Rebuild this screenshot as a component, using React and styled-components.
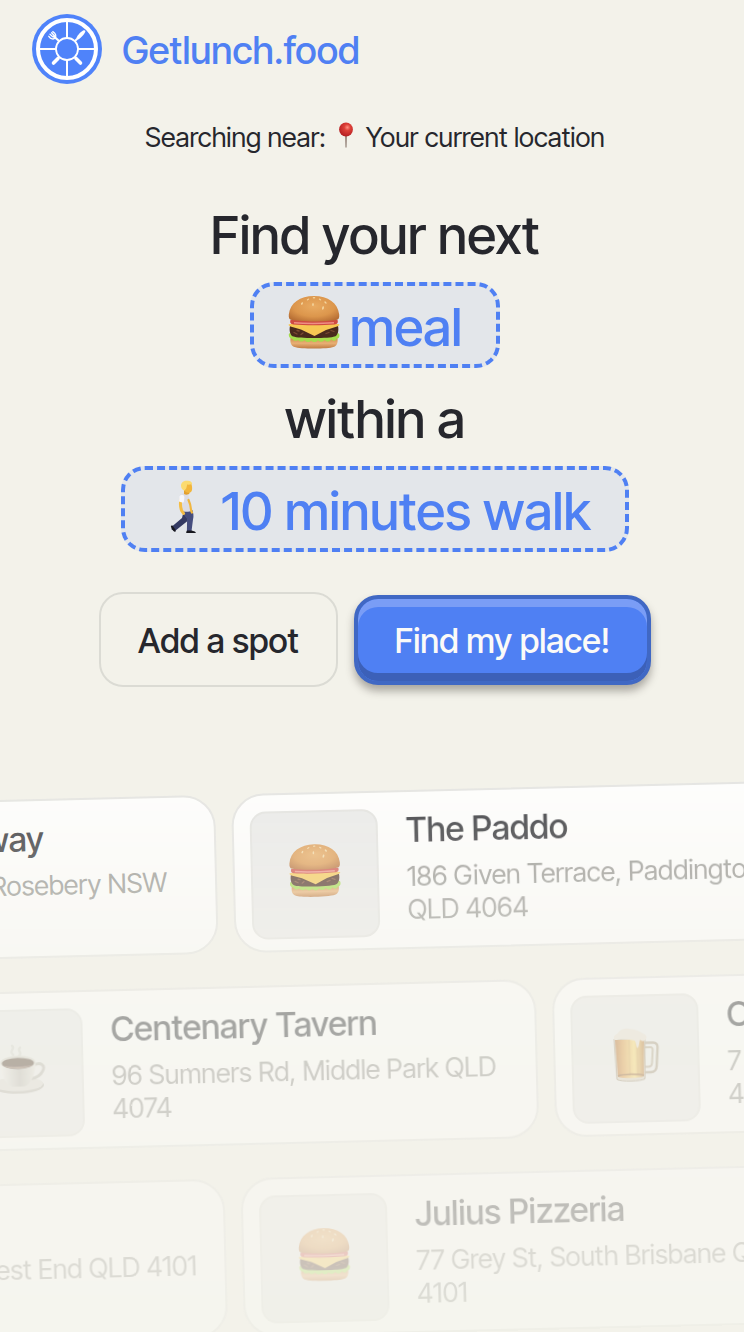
import React from "react";
import styled, { createGlobalStyle } from "styled-components";

const color = {
  page: "#f3f2ea",
  ink: "#26272d",
  blue: "#4f80f3",
  pill: "#e3e6ea",
  line: "#dbdbd4",
};

const GlobalStyle = createGlobalStyle`
  *, *::before, *::after { box-sizing: border-box; }
  body {
    margin: 0;
    background: ${color.page};
    color: ${color.ink};
    font-family: "Inter Tight", "Inter", "Liberation Sans", sans-serif;
    font-weight: 500;
  }
  button { font: inherit; color: inherit; cursor: pointer; }
`;

const Page = styled.div`
  display: flex;
  flex-direction: column;
  height: 100vh;
  min-height: 1100px;
  overflow: hidden;
`;

const Header = styled.header`
  display: flex;
  padding: 14px 32px;
`;

const Brand = styled.a`
  display: flex;
  align-items: center;
  gap: 20px;
  color: ${color.blue};
  font-size: 38px;
  line-height: 48px;
  text-decoration: none;
  svg { width: 70px; height: 70px; }
`;

const BrandName = styled.span`
  padding-top: 2px;
`;

const Main = styled.main`
  display: flex;
  flex-direction: column;
  align-items: center;
  padding: 23px 12px 0 18px;
`;

const Location = styled.p`
  display: flex;
  align-items: center;
  margin: 0;
  gap: 12px;
  font-size: 27px;
  line-height: 34px;
  font-weight: 400;
  svg { width: 16px; height: 28px; margin-bottom: 4px; }
`;

const Question = styled.h1`
  display: flex;
  flex-direction: column;
  align-items: center;
  gap: 8px;
  margin: 37px 0 0;
  font-size: 53px;
  font-weight: 500;
`;

const Line = styled.span`
  padding-top: 4px;
  line-height: 78px;
`;

const Pill = styled.button`
  display: flex;
  align-items: center;
  gap: 10px;
  height: 86px;
  padding: 0 34px;
  border: 4px dashed ${color.blue};
  border-radius: 24px;
  background: ${color.pill};
  color: ${color.blue};
  line-height: 72px;
  svg { flex: none; margin-bottom: 6px; }
`;

const PillText = styled.span`
  padding-top: 4px;
`;

const Actions = styled.div`
  display: flex;
  align-items: center;
  gap: 16px;
  margin-top: 40px;
  font-size: 34px;
  line-height: 44px;
`;

const OutlineButton = styled.button`
  height: 95px;
  padding: 2px 37px 0;
  border: 2px solid ${color.line};
  border-radius: 24px;
  background: transparent;
`;

const PrimaryButton = styled.button`
  height: 90px;
  margin-top: 1px;
  padding: 2px 37px 0;
  border: 4px solid #4068c4;
  border-radius: 24px;
  background: ${color.blue};
  box-shadow: inset 0 8px 0 #7a9df6, inset 0 -8px 0 #3c60b8,
    0 6px 8px rgba(60, 55, 50, 0.4);
  && { color: #fbfaf8; }
`;

const Spots = styled.section`
  flex: 1 1 0;
  min-height: 0;
  margin-top: 53px;
  padding-top: 60px;
  overflow: hidden;
  mask-image: linear-gradient(
    to bottom,
    rgba(0, 0, 0, 0.85) 40px,
    rgba(0, 0, 0, 0.72) 90px,
    rgba(0, 0, 0, 0.6) 145px,
    rgba(0, 0, 0, 0.44) 215px,
    rgba(0, 0, 0, 0.38) 270px,
    rgba(0, 0, 0, 0.34) 370px,
    rgba(0, 0, 0, 0.26) 450px,
    rgba(0, 0, 0, 0.22) 590px
  );
`;

const Rows = styled.div`
  display: flex;
  flex-direction: column;
  gap: 33px;
  transform: rotate(-1.4deg);
  transform-origin: top left;
`;

const SpotRow = styled.ul`
  display: flex;
  gap: 16px;
  margin: 0 0 0 ${(p) => p.$shift}px;
  padding: 0;
  list-style: none;
`;

const Card = styled.li`
  display: flex;
  flex: none;
  gap: 28px;
  width: 600px;
  height: 159px;
  padding: 16px 16px 12px;
  border: 2px solid #e3e3e1;
  border-radius: 32px;
  background: #ffffff;
`;

const Thumb = styled.div`
  display: grid;
  place-items: center;
  flex: none;
  width: 128px;
  height: 128px;
  border: 2px solid #e2e2e0;
  border-radius: 16px;
  background: #eaeaea;
  svg { margin-bottom: 8px; }
`;

const SpotName = styled.h2`
  margin: 0;
  font-size: 34px;
  line-height: 44px;
  font-weight: 500;
`;

const SpotText = styled.div`
  flex: 1;
  min-width: 0;
`;

const Address = styled.p`
  margin: 8px 0 0;
  color: #8f8f8c;
  font-size: 27px;
  line-height: 33px;
  font-weight: 400;
`;

const Logo = () => (
  <svg viewBox="0 0 70 70" aria-hidden="true">
    <circle cx="35" cy="35" r="35" fill="#4f83fa" />
    <circle cx="35" cy="35" r="29" fill="none" stroke="#fff" strokeWidth="4" />
    <path d="M35 7v17M35 46v17M7 35h17M46 35h17" stroke="#fff" strokeWidth="2" />
    <circle cx="35" cy="35" r="11" fill="none" stroke="#fff" strokeWidth="1.8" />
    <g fill="none" stroke="#fff" strokeLinecap="round">
      <path d="M21.500 49l4.500-4.500M44 44.500l4.500 4.500" strokeWidth="3.600" />
      <path d="M43.500 26.500l3-3" strokeWidth="2" />
      <path d="M22 22.500l5 4.500" strokeWidth="2.200" />
      <path d="M16.800 22.300c2 3 5 3.400 6.300 1.600s1-4.300-2.300-6.300M18 20.300l3 2.600M19.600 18.800l2.800 3" strokeWidth="1.300" />
    </g>
    <path d="M44.500 23.800c1-2.700 4.800-6.600 7.200-7.500 1.300-.4 2 .4 1.500 1.700-1 2.600-4.200 5.700-6.900 7.600z" fill="#fff" />
  </svg>
);

const Pin = () => (
  <svg viewBox="0 0 16 28" aria-hidden="true">
    <defs>
      <radialGradient id="pinHead" cx="0.6" cy="0.35" r="0.65">
        <stop offset="0" stopColor="#ff8f80" />
        <stop offset="0.35" stopColor="#dd4038" />
        <stop offset="1" stopColor="#b51f22" />
      </radialGradient>
    </defs>
    <path d="M7 12h2l-.4 13.500h-1.200z" fill="#97877d" />
    <circle cx="8" cy="7.500" r="6.900" fill="url(#pinHead)" />
  </svg>
);

const Burger = () => (
  <svg width="52" height="54" viewBox="0 0 52 54" aria-hidden="true">
    <defs>
      <radialGradient id="bun" cx="0.5" cy="0.4" r="0.68">
        <stop offset="0" stopColor="#e9ab62" />
        <stop offset="0.6" stopColor="#dc964c" />
        <stop offset="1" stopColor="#b56c33" />
      </radialGradient>
      <linearGradient id="heel" x1="0" y1="0" x2="0" y2="1">
        <stop offset="0" stopColor="#cf8c4c" />
        <stop offset="0.5" stopColor="#e8b075" />
        <stop offset="1" stopColor="#c07c42" />
      </linearGradient>
    </defs>
    <path d="M2.500 43h47c.5 5-.4 7.500-4 9-5 2-34 2-39 0-3.600-1.500-4.500-4-4-9z" fill="url(#heel)" />
    <path d="M1 38.500c5-2.500 45-2.500 50 0 1.200 2.500-.2 5.500-2 5-1.500 3-4 3-5.500.800-2 3-5 3-6.800.7-2 2.300-5 2.300-6.700.2-2 2.500-5 2.400-6.800.2-2 2.200-5 2-6.600-.2-2 2-5 1.800-6.500-.3-2 1.600-4.600 1-5.600-1C2 43.500 .2 41.500 1 38.500z" fill="#a5dc4c" />
    <path d="M2 31h48c1.200 5-.6 10-3.500 10.600-4 2-37 2-41 0C2.600 41 .8 36 2 31z" fill="#4a2a1d" />
    <path d="M6 37.500l3 1.500M13 39.500l2-1.500M38 38.500l3-1M43 35.500l3 1M9 35.500l2 .5" stroke="#7b4b32" strokeWidth="1.300" strokeLinecap="round" />
    <path d="M.8 29.200c12-2 38-2 50.400 0 .6 1-.4 1.600-2.200 2.200L38 35l-11.500 6L13 34.500 2.500 31.500C.9 31 .3 30.200.8 29.200z" fill="#f7c853" />
    <path d="M2.500 25h47c1 3-.5 4.200-3 4.500-12 1-30 1-41 0-2.500-.3-4-1.500-3-4.500z" fill="#cf4a42" />
    <path d="M6 27.700c9 .8 26 .9 40 .1" stroke="#ee8f85" strokeWidth="1.500" fill="none" />
    <path d="M.8 19.500C2 8 12 1 26 1s24 7 25.200 18.500c.3 3.500-.5 5-3 5.500-10 1.900-34 1.900-44.400 0-2.500-.5-3.300-2-3-5.500z" fill="url(#bun)" />
    <g fill="#f4d6a0">
      <ellipse cx="14" cy="8.500" rx="0.800" ry="1.400" transform="rotate(30 14 8.500)" />
      <ellipse cx="20" cy="4.500" rx="0.700" ry="1.300" transform="rotate(60 20 4.500)" />
      <ellipse cx="26" cy="2.800" rx="0.700" ry="1.300" transform="rotate(90 26 2.800)" />
      <ellipse cx="25" cy="9.500" rx="0.800" ry="1.500" />
      <ellipse cx="32" cy="4.500" rx="0.700" ry="1.300" transform="rotate(-60 32 4.500)" />
      <ellipse cx="37.500" cy="7.500" rx="0.800" ry="1.400" transform="rotate(-45 37.500 7.500)" />
      <ellipse cx="35" cy="13" rx="0.900" ry="1.700" transform="rotate(15 35 13)" />
    </g>
  </svg>
);

const Walker = () => (
  <svg width="52" height="54" viewBox="-11 -1 52 54" aria-hidden="true">
    <path d="M14 30l-2 8-10 8.500-.5 3 3.500 1.500L17.500 41l1-8z" fill="#343a63" />
    <path d="M12.500 30h9.800c1 3 1.700 6 .7 9.500l-1.500 11.700h-4.600l.2-12.200-5-6.500z" fill="#454d7e" />
    <path d="M.8 46l1.400-.8 3.200 4.200c.6 1.500.2 2.600-.8 2.300C3 51 1.500 48.700.8 46z" fill="#17171e" />
    <path d="M17 50.500h4.800c1.600.6 3.400 1 3.900 1.800.1.800-.3 1-1 1h-8.400c-.2-1 0-1.900.7-2.800z" fill="#17171e" />
    <path d="M10.500 14.500c2.500-1.800 6.300-1.300 7.500.5 1.800 3.800 3.400 9 4 15.700-3 1.300-8 1.300-11.100 0C9.700 25 8.500 18 10.500 14.500z" fill="#dcdce5" />
    <path d="M18.500 20c1.800 3.500 2.300 6.500 2.600 10.500l.8 2" stroke="#f0b63f" strokeWidth="2.200" fill="none" strokeLinecap="round" />
    <path d="M11 19.500c-1 4-.5 8 .6 11l2 3" stroke="#f4bd45" strokeWidth="3" fill="none" strokeLinecap="round" />
    <path d="M9.500 16.500c1-2.300 4.500-2.300 4.900.5l-.6 5.200c-1.700.4-3.600.2-4.800-.6z" fill="#f7f7fb" />
    <path d="M14 10h5.500v3c0 1.500-3.500 2.300-5.500 1z" fill="#e3a030" />
    <path d="M12.500 3.500h8.800c.8 2.500.9 4 .8 5.500 0 2-1.200 3.800-3.300 3.800-3.300 0-6.300-3-6.300-9.300z" fill="#f2b63c" />
    <path d="M11.200 7c-1-4 2-6.600 6-6.300 2.500-.3 4.600.8 5 3.200-2 .8-3.400.8-5 .7l-.9 3.600-2 2.500C12.700 10 11.500 9 11.200 7z" fill="#fbdb70" />
  </svg>
);

const Coffee = () => (
  <svg width="54" height="54" viewBox="0 0 54 54" aria-hidden="true">
    <defs>
      <linearGradient id="cup" x1="0" y1="0" x2="1" y2="0">
        <stop offset="0" stopColor="#efeeea" />
        <stop offset="0.55" stopColor="#bcbab3" />
        <stop offset="1" stopColor="#e6e4de" />
      </linearGradient>
    </defs>
    <path d="M21 12c-5-4 3-6-1-9M27 13c4-3-3-5 1-8" stroke="#d3d3cf" strokeWidth="2.500" fill="none" strokeLinecap="round" />
    <ellipse cx="25" cy="43" rx="26" ry="8" fill="#b9b7b0" />
    <ellipse cx="25" cy="41.500" rx="25" ry="7" fill="#dddbd5" />
    <path d="M41 23c8-4 12 1 9 6-2 4-6 6.500-12 7.500" stroke="#b9b7b0" strokeWidth="2.800" fill="none" />
    <path d="M8 20h35c0 11-5 23-12 24H20C13 43 8 31 8 20z" fill="url(#cup)" />
    <ellipse cx="25.500" cy="20" rx="17.500" ry="7" fill="#d2cfc8" />
    <ellipse cx="25.500" cy="20.800" rx="16" ry="5.600" fill="#4f392d" />
    <path d="M11 22.500c5 4.500 24 4.500 29 0-5 2-24 2-29 0z" fill="#8f7361" />
  </svg>
);

const Beer = () => (
  <svg width="48" height="54" viewBox="-2 0 48 54" aria-hidden="true">
    <defs>
      <linearGradient id="ale" x1="0" y1="0" x2="1" y2="0">
        <stop offset="0" stopColor="#b0611c" />
        <stop offset="0.25" stopColor="#dc9236" />
        <stop offset="0.65" stopColor="#fbd668" />
        <stop offset="1" stopColor="#b46e26" />
      </linearGradient>
    </defs>
    <path d="M31 15.500h9c3 0 4.500 2 4.300 5L43 39c-.3 4-3 6-6 6h-6" stroke="#a5967f" strokeWidth="2.400" fill="none" />
    <path d="M31 20h6c1.700 0 2.500 1 2.400 3l-1 13c-.2 2.500-1.500 3.500-3.500 3.500H31" stroke="#b0a28c" strokeWidth="2" fill="none" />
    <path d="M1 11h31l-1 40.500c-4 2.500-24 2.500-28 0z" fill="#d8cfbf" stroke="#a08f76" />
    <path d="M2 12h29l-1 37c-5 1.800-21 1.800-26 0z" fill="url(#ale)" />
    <path d="M16 12v36M24 12v36" stroke="#b97c2f" strokeOpacity="0.450" strokeWidth="1" />
    <path d="M4 48c5-2 21-2 26 0" stroke="#8d5520" strokeWidth="1.600" fill="none" />
    <path d="M1 11C0 7 4 6.500 5 5c3-4.500 9-5 13-3.500C25 2 28 5 32.500 7.500c2 2 1 5-1.500 6-2 .7-3-.5-4-1-1 1.500-1 8-2.500 8S23 13.500 21.500 13C14 12 8 10.500 3.500 12 2 12.200 1.200 12 1 11z" fill="#e6dccf" />
  </svg>
);

const icons = { burger: Burger, coffee: Coffee, beer: Beer };

const rows = [
  {
    shift: -385,
    spots: [
      { icon: "burger", name: "Kebab Takeaway", address: "116 Dunning Ave, Rosebery NSW 2018" },
      { icon: "burger", name: "The Paddo", address: "186 Given Terrace, Paddington QLD 4064" },
    ],
  },
  {
    shift: -69,
    spots: [
      { icon: "coffee", name: "Centenary Tavern", address: "96 Sumners Rd, Middle Park QLD 4074" },
      { icon: "beer", name: "Osbourne Hotel", address: "7 Mount Gravatt Rd, Nathan QLD 4111" },
    ],
  },
  {
    shift: -385,
    spots: [
      { icon: "coffee", name: "Lefty's", address: "1 Boundary St, West End QLD 4101" },
      { icon: "burger", name: "Julius Pizzeria", address: "77 Grey St, South Brisbane QLD 4101" },
    ],
  },
];

const SpotCard = ({ icon, name, address }) => {
  const Icon = icons[icon];
  return (
    <Card>
      <Thumb>
        <Icon />
      </Thumb>
      <SpotText>
        <SpotName>{name}</SpotName>
        <Address>{address}</Address>
      </SpotText>
    </Card>
  );
};

export default function App() {
  return (
    <>
      <GlobalStyle />
      <Page>
        <Header>
          <Brand href="/">
            <Logo />
            <BrandName>Getlunch.food</BrandName>
          </Brand>
        </Header>
        <Main>
          <Location>
            <span>Searching near:</span>
            <Pin />
            <span>Your current location</span>
          </Location>
          <Question>
            <Line>Find your next</Line>
            <Pill type="button">
              <Burger />
              <PillText>meal</PillText>
            </Pill>
            <Line>within a</Line>
            <Pill type="button">
              <Walker />
              <PillText>10 minutes walk</PillText>
            </Pill>
          </Question>
          <Actions>
            <OutlineButton type="button">Add a spot</OutlineButton>
            <PrimaryButton type="button">Find my place!</PrimaryButton>
          </Actions>
        </Main>
        <Spots aria-label="Nearby spots">
          <Rows>
            {rows.map((row, i) => (
              <SpotRow key={i} $shift={row.shift}>
                {row.spots.map((spot) => (
                  <SpotCard key={spot.name} {...spot} />
                ))}
              </SpotRow>
            ))}
          </Rows>
        </Spots>
      </Page>
    </>
  );
}
